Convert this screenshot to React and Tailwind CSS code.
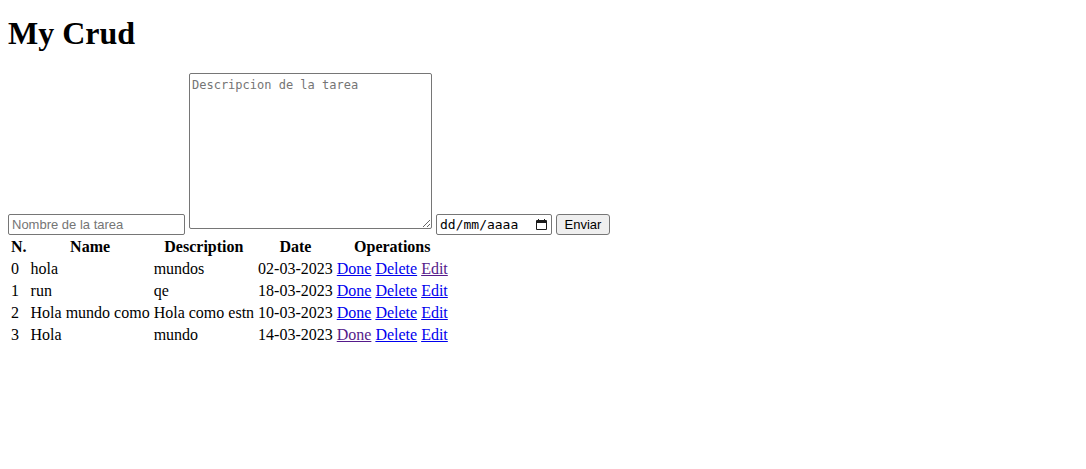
import React from "react";

const tasks = [
  { name: "hola", description: "mundos", date: "02-03-2023", visited: "Edit" },
  { name: "run", description: "qe", date: "18-03-2023" },
  { name: "Hola mundo como", description: "Hola como estn", date: "10-03-2023" },
  { name: "Hola", description: "mundo", date: "14-03-2023", visited: "Done" },
];

const operations = ["Done", "Delete", "Edit"];

function CalendarIcon() {
  return (
    <svg className="block h-3 w-[11px]" viewBox="0 0 11 12" aria-hidden="true">
      <path
        fill="#1a1a1a"
        fillRule="evenodd"
        d="M2 0h1v1h5V0h1v1h1a1 1 0 0 1 1 1v8a1 1 0 0 1-1 1H1a1 1 0 0 1-1-1V2a1 1 0 0 1 1-1h1zM1 4v6h9V4z"
      />
    </svg>
  );
}

function TaskForm() {
  return (
    <form className="flex items-end gap-1" onSubmit={(e) => e.preventDefault()}>
      <input
        type="text"
        aria-label="Nombre de la tarea"
        placeholder="Nombre de la tarea"
        className="h-[21px] w-[177px] rounded-xs border border-[#767676] bg-white px-[3px] font-['Liberation_Sans',sans-serif] text-[13px] leading-4 placeholder:text-[#757575]"
      />
      <textarea
        aria-label="Descripcion de la tarea"
        placeholder="Descripcion de la tarea"
        className="mb-1.5 h-[156px] w-[243px] resize rounded-xs border border-[#767676] bg-white px-0.5 py-[3px] font-['DejaVu_Sans_Mono',monospace] text-[12px] leading-4 placeholder:text-[#757575]"
      />
      <div className="flex h-[21px] w-[116px] items-center rounded-xs border border-[#767676] bg-white pr-1 pl-[3px]">
        <input
          type="text"
          aria-label="Fecha"
          placeholder="dd/mm/aaaa"
          className="min-w-0 flex-1 font-['DejaVu_Sans_Mono',monospace] text-[13px] leading-4 outline-none placeholder:text-black"
        />
        <button type="button" aria-label="Abrir calendario">
          <CalendarIcon />
        </button>
      </div>
      <button
        type="submit"
        className="h-[21px] w-[54px] rounded-[3px] border border-[#767676] bg-[#efefef] font-['Liberation_Sans',sans-serif] text-[13px] leading-4"
      >
        Enviar
      </button>
    </form>
  );
}

function TaskTable() {
  return (
    <table className="border-separate border-spacing-0.5 leading-[18px]">
      <thead>
        <tr>
          <th className="p-px">N.</th>
          <th className="p-px">Name</th>
          <th className="p-px">Description</th>
          <th className="p-px">Date</th>
          <th className="p-px">Operations</th>
        </tr>
      </thead>
      <tbody>
        {tasks.map((task, index) => (
          <tr key={task.date}>
            <td className="p-px">{index}</td>
            <td className="p-px">{task.name}</td>
            <td className="p-px">{task.description}</td>
            <td className="p-px">{task.date}</td>
            <td className="p-px">
              <div className="flex gap-1">
                {operations.map((operation) => (
                  <a
                    key={operation}
                    href={`#${operation.toLowerCase()}-${index}`}
                    className={
                      task.visited === operation
                        ? "text-[#551a8b] underline"
                        : "text-[#0000ee] underline"
                    }
                  >
                    {operation}
                  </a>
                ))}
              </div>
            </td>
          </tr>
        ))}
      </tbody>
    </table>
  );
}

export default function App() {
  return (
    <main className="bg-white px-2 pt-[15px] font-['Liberation_Serif',serif] text-base text-black">
      <h1 className="mb-[21px] text-[32px] leading-[37px] font-bold">My Crud</h1>
      <TaskForm />
      <TaskTable />
    </main>
  );
}
